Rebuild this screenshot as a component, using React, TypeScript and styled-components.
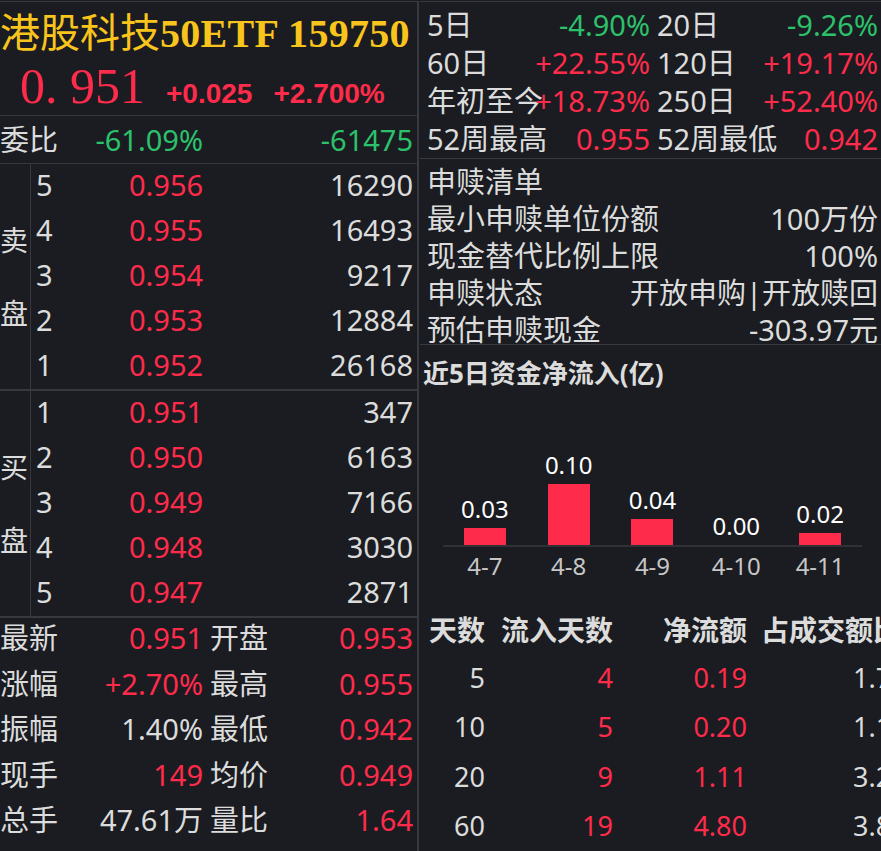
import styled, { createGlobalStyle } from "styled-components";

const C = {
	bg: "#1a1c21",
	line: "#36393f",
	axis: "#2e3136",
	text: "#dcdcdc",
	dim: "#c6c6c6",
	red: "#ff2b4a",
	green: "#2cc16b",
	yellow: "#f9c51c",
};

type Tone = "red" | "green" | "text";

const GlobalStyle = createGlobalStyle`
	html, body {
		margin: 0;
		padding: 0;
		background: ${C.bg};
		overflow: hidden;
	}
	body {
		font-family: "Noto Sans", "Noto Sans CJK SC", sans-serif;
		color: ${C.text};
	}
`;

const Screen = styled.div`
	display: flex;
	width: 881px;
	height: 851px;
	padding-top: 1px;
	box-sizing: border-box;
	overflow: hidden;
`;

/* ---------- left panel ---------- */

const LeftPanel = styled.section`
	width: 417px;
	flex: none;
	border-top: 1px solid ${C.line};
	border-right: 2px solid ${C.line};
	font-size: 29px;
`;

const Title = styled.div`
	height: 56px;
	line-height: 56px;
	font-family: "Liberation Serif", "Noto Sans CJK SC", serif;
	font-size: 40px;
	font-weight: 700;
	letter-spacing: 0.3px;
	color: ${C.yellow};
	white-space: nowrap;
`;

const TitleName = styled.span`
	font-family: "Noto Sans CJK SC", sans-serif;
	font-weight: 400;
	letter-spacing: 0;
`;

const PriceRow = styled.div`
	display: flex;
	align-items: baseline;
	height: 57px;
	border-bottom: 1px solid ${C.line};
	color: ${C.red};
`;

const BigPrice = styled.span`
	margin-left: 20px;
	font-family: "Liberation Serif", serif;
	font-size: 50px;
	line-height: 57px;
`;

const Change = styled.span<{ $gap: number }>`
	margin-left: ${(p) => p.$gap}px;
	font-family: "Liberation Sans", sans-serif;
	font-weight: 700;
	font-size: 28px;
`;

const QuadRow = styled.div<{ $h: number; $lh: number; $line?: boolean }>`
	display: grid;
	grid-template-columns: 60px 143px 70px 140px;
	align-items: start;
	height: ${(p) => p.$h}px;
	line-height: ${(p) => p.$lh}px;
	white-space: nowrap;
	${(p) => (p.$line ? `border-bottom: 1px solid ${C.line};` : "")}
`;

const Label = styled.span<{ $indent?: number }>`
	color: ${C.text};
	padding-left: ${(p) => p.$indent ?? 0}px;
`;

const Num = styled.span<{ $tone: Tone; $span?: number }>`
	text-align: right;
	color: ${(p) => (p.$tone === "red" ? C.red : p.$tone === "green" ? C.green : C.text)};
	${(p) => (p.$span ? `grid-column: span ${p.$span};` : "")}
`;

const BookSection = styled.div`
	display: flex;
	border-bottom: 2px solid ${C.line};
`;

const SideLabel = styled.div`
	width: 30px;
	flex: none;
	display: flex;
	flex-direction: column;
	justify-content: center;
	gap: 44px;
	border-right: 1px solid ${C.line};
	font-size: 28px;
	line-height: 29px;
	color: ${C.text};
`;

const BookRows = styled.div`
	flex: 1;
`;

const BookRow = styled.div`
	display: grid;
	grid-template-columns: 93px 1fr auto;
	align-items: start;
	height: 45px;
	line-height: 41px;
	padding: 0 4px 0 5px;
`;

const Level = styled.span`
	color: ${C.text};
`;

const BookPrice = styled.span`
	color: ${C.red};
`;

const Volume = styled.span`
	text-align: right;
	color: ${C.text};
`;

/* ---------- right panel ---------- */

const RightPanel = styled.section`
	flex: 1;
	min-width: 0;
	margin-left: 1px;
	border-top: 1px solid ${C.line};
	overflow: hidden;
	font-size: 29px;
`;

const PerfGrid = styled.div`
	display: grid;
	grid-template-columns: 223px 221px;
	grid-auto-rows: 38px;
	column-gap: 7px;
	padding: 4px 3px 0 7px;
	border-bottom: 1px solid ${C.line};
	line-height: 38px;
	white-space: nowrap;
`;

const Cell = styled.div`
	display: grid;
	align-items: center;
	& > * {
		grid-area: 1 / 1;
	}
`;

const CellValue = styled.span<{ $tone: Tone }>`
	justify-self: end;
	color: ${(p) => (p.$tone === "red" ? C.red : p.$tone === "green" ? C.green : C.text)};
`;

const CreationList = styled.div`
	display: grid;
	grid-auto-rows: 37px;
	box-sizing: border-box;
	height: 186px;
	padding: 4px 3px 0 7px;
	border-bottom: 1px solid ${C.line};
	line-height: 37px;
	white-space: nowrap;
`;

const ChartTitle = styled.div`
	height: 56px;
	line-height: 56px;
	padding-left: 3px;
	font-size: 26px;
	font-weight: 700;
	color: ${C.text};
`;

const Chart = styled.div`
	width: 419px;
	margin-left: 23px;
`;

const Plot = styled.div`
	display: flex;
	align-items: flex-end;
	height: 144px;
	border-bottom: 2px solid ${C.axis};
`;

const Slot = styled.div`
	flex: 1;
	display: flex;
	flex-direction: column;
	align-items: center;
`;

const BarValue = styled.span`
	margin-bottom: 5px;
	font-size: 24px;
	line-height: 28px;
	color: #ffffff;
`;

const Bar = styled.div`
	width: 42px;
	background: ${C.red};
`;

const DateRow = styled.div`
	display: flex;
	margin-top: 5px;
`;

const DateLabel = styled.span`
	flex: 1;
	text-align: center;
	font-size: 24px;
	line-height: 28px;
	color: ${C.dim};
`;

const FlowTable = styled.div`
	display: grid;
	grid-template-columns: 65px 128px 134px 182px;
	width: max-content;
	margin-top: 27px;
	font-size: 27px;
	white-space: nowrap;
`;

const Th = styled.span`
	height: 46px;
	line-height: 46px;
	text-align: right;
	font-size: 28px;
	font-weight: 700;
	color: ${C.text};
`;

const Td = styled.span<{ $tone: Tone }>`
	height: 49.3px;
	line-height: 49.3px;
	text-align: right;
	color: ${(p) => (p.$tone === "red" ? C.red : C.text)};
`;

/* ---------- data ---------- */

const asks = [
	["5", "0.956", "16290"],
	["4", "0.955", "16493"],
	["3", "0.954", "9217"],
	["2", "0.953", "12884"],
	["1", "0.952", "26168"],
];

const bids = [
	["1", "0.951", "347"],
	["2", "0.950", "6163"],
	["3", "0.949", "7166"],
	["4", "0.948", "3030"],
	["5", "0.947", "2871"],
];

const stats: [string, string, Tone, string, string, Tone][] = [
	["最新", "0.951", "red", "开盘", "0.953", "red"],
	["涨幅", "+2.70%", "red", "最高", "0.955", "red"],
	["振幅", "1.40%", "text", "最低", "0.942", "red"],
	["现手", "149", "red", "均价", "0.949", "red"],
	["总手", "47.61万", "text", "量比", "1.64", "red"],
	["外盘", "20.12万", "red", "内盘", "27.49万", "green"],
];

const perf: [string, string, Tone][] = [
	["5日", "-4.90%", "green"],
	["20日", "-9.26%", "green"],
	["60日", "+22.55%", "red"],
	["120日", "+19.17%", "red"],
	["年初至今", "+18.73%", "red"],
	["250日", "+52.40%", "red"],
	["52周最高", "0.955", "red"],
	["52周最低", "0.942", "red"],
];

const creation = [
	["申赎清单", ""],
	["最小申赎单位份额", "100万份"],
	["现金替代比例上限", "100%"],
	["申赎状态", "开放申购|开放赎回"],
	["预估申赎现金", "-303.97元"],
];

const flows = [
	{ date: "4-7", label: "0.03", value: 0.028 },
	{ date: "4-8", label: "0.10", value: 0.1 },
	{ date: "4-9", label: "0.04", value: 0.043 },
	{ date: "4-10", label: "0.00", value: 0 },
	{ date: "4-11", label: "0.02", value: 0.02 },
];

const flowRows = [
	["5", "4", "0.19", "1.73%"],
	["10", "5", "0.20", "1.12%"],
	["20", "9", "1.11", "3.25%"],
	["60", "19", "4.80", "3.86%"],
];

const OrderBook = ({ side, rows }: { side: [string, string]; rows: string[][] }) => (
	<BookSection>
		<SideLabel>
			<span>{side[0]}</span>
			<span>{side[1]}</span>
		</SideLabel>
		<BookRows>
			{rows.map(([lv, price, vol]) => (
				<BookRow key={lv}>
					<Level>{lv}</Level>
					<BookPrice>{price}</BookPrice>
					<Volume>{vol}</Volume>
				</BookRow>
			))}
		</BookRows>
	</BookSection>
);

export default function App() {
	return (
		<Screen>
			<GlobalStyle />
			<LeftPanel>
				<Title>
					<TitleName>港股科技</TitleName>50ETF 159750
				</Title>
				<PriceRow>
					<BigPrice>0. 951</BigPrice>
					<Change $gap={21}>+0.025</Change>
					<Change $gap={21}>+2.700%</Change>
				</PriceRow>
				<QuadRow $h={47} $lh={47} $line>
					<Label>委比</Label>
					<Num $tone="green">-61.09%</Num>
					<Num $tone="green" $span={2}>
						-61475
					</Num>
				</QuadRow>
				<OrderBook side={["卖", "盘"]} rows={asks} />
				<OrderBook side={["买", "盘"]} rows={bids} />
				{stats.map(([l1, v1, t1, l2, v2, t2]) => (
					<QuadRow key={l1} $h={45.5} $lh={39}>
						<Label>{l1}</Label>
						<Num $tone={t1}>{v1}</Num>
						<Label $indent={7}>{l2}</Label>
						<Num $tone={t2}>{v2}</Num>
					</QuadRow>
				))}
			</LeftPanel>

			<RightPanel>
				<PerfGrid>
					{perf.map(([label, value, tone]) => (
						<Cell key={label}>
							<Label>{label}</Label>
							<CellValue $tone={tone}>{value}</CellValue>
						</Cell>
					))}
				</PerfGrid>
				<CreationList>
					{creation.map(([label, value]) => (
						<Cell key={label}>
							<Label>{label}</Label>
							<CellValue $tone="text">{value}</CellValue>
						</Cell>
					))}
				</CreationList>
				<ChartTitle>近5日资金净流入(亿)</ChartTitle>
				<Chart>
					<Plot>
						{flows.map((f) => (
							<Slot key={f.date}>
								<BarValue>{f.label}</BarValue>
								<Bar style={{ height: Math.round(f.value * 610) }} />
							</Slot>
						))}
					</Plot>
					<DateRow>
						{flows.map((f) => (
							<DateLabel key={f.date}>{f.date}</DateLabel>
						))}
					</DateRow>
				</Chart>
				<FlowTable>
					<Th>天数</Th>
					<Th>流入天数</Th>
					<Th>净流额</Th>
					<Th>占成交额比例</Th>
					{flowRows.map(([days, inDays, net, ratio]) => (
						<>
							<Td $tone="text">{days}</Td>
							<Td $tone="red">{inDays}</Td>
							<Td $tone="red">{net}</Td>
							<Td $tone="text">{ratio}</Td>
						</>
					))}
				</FlowTable>
			</RightPanel>
		</Screen>
	);
}
